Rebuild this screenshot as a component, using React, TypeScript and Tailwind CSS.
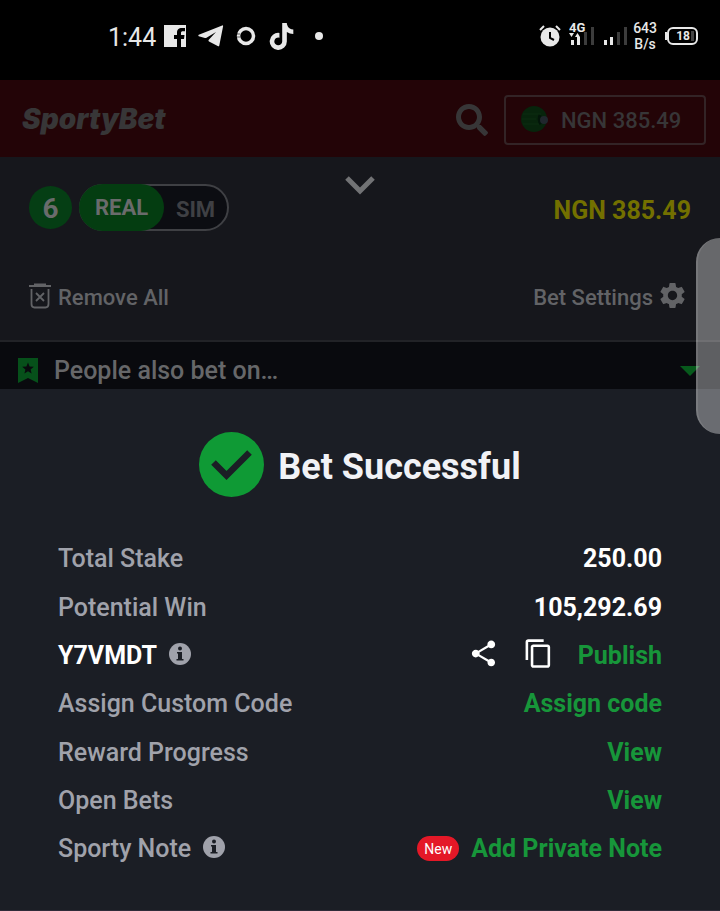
import { useState } from "react";
import type { ReactNode } from "react";
import { FaSearch, FaTiktok } from "react-icons/fa";
import { MdContentCopy, MdSettings, MdShare } from "react-icons/md";

const BALANCE = "NGN 385.49";

function SignalBars({ network }: { network?: string }) {
    return (
        <svg width="25" height="32" viewBox="0 0 25 32" aria-hidden="true">
            {network && (
                <>
                    <text x="0" y="12" fontSize="13" fontWeight="700" fill="#e8e8e8" fontFamily="Roboto, sans-serif">
                        {network}
                    </text>
                    <path d="M0 13h5l-2.500 4zM6 17h5l-2.500-4z" fill="#e8e8e8" />
                </>
            )}
            <rect x="2" y="20" width="3" height="5" fill="#e8e8e8" />
            <rect x="8" y="17" width="3" height="8" fill="#e8e8e8" />
            <rect x="15" y="12" width="3" height="13" fill="#3c3c3c" />
            <rect x="22" y="7" width="3" height="18" fill="#3c3c3c" />
        </svg>
    );
}

function InfoIcon() {
    return (
        <svg width="22" height="22" viewBox="0 0 22 22" aria-hidden="true">
            <circle cx="11" cy="11" r="11" fill="currentColor" />
            <circle cx="11" cy="5.500" r="2" fill="#1b1e25" />
            <path d="M8 9h5v7h1.500v1.500h-7V16H9v-5.500H8z" fill="#1b1e25" />
        </svg>
    );
}

function StatusBar() {
    return (
        <div className="flex h-20 items-start justify-between bg-black pl-[108px] pr-[22px] pt-5 text-[#e8e8e8]">
            <div className="flex h-8 items-center">
                <span className="pt-1 text-[25px]">1:44</span>
                <svg className="ml-2" width="22" height="22" viewBox="0 0 22 22" aria-hidden="true">
                    <path
                        fill="currentColor"
                        d="M0 0h22v22h-5v-8h3l.5-4H17V8c0-1.200.5-1.800 2-1.800h2V3h-3c-3.500 0-5 2-5 4.600V10h-3v4h3v8H0z"
                    />
                </svg>
                <svg className="ml-3" width="26" height="22" viewBox="0 0 26 22" fill="currentColor" aria-hidden="true">
                    <path d="M.8 9.800L24.200.4q1-.2.900.8l-3.800 19.200q-.4 1.400-1.600.7L11 16.500q-1-.8-.2-1.700L18 7 8.500 12.800q-.8.500-1.600.2L.8 11.300q-.9-.8 0-1.500z" />
                </svg>
                <svg className="ml-3" width="20" height="20" viewBox="0 0 20 20" aria-hidden="true">
                    <circle cx="10" cy="10" r="7.500" fill="none" stroke="currentColor" strokeWidth="3.500" />
                    <path d="M0 8h4M0 11h4" stroke="#000" strokeWidth=".6" />
                </svg>
                <FaTiktok className="ml-3" size={27} />
                <span className="ml-5 size-2 rounded-full bg-[#e8e8e8]" />
            </div>
            <div className="flex h-8 items-center">
                <svg width="22" height="22" viewBox="0 0 22 22" aria-hidden="true">
                    <circle cx="11" cy="12" r="9.500" fill="currentColor" />
                    <path d="M1 5l4-4M21 5l-4-4" stroke="currentColor" strokeWidth="2" />
                    <path d="M11 7v6l4 2" fill="none" stroke="#000" strokeWidth="2" />
                </svg>
                <div className="ml-2">
                    <SignalBars network="4G" />
                </div>
                <div className="ml-2">
                    <SignalBars />
                </div>
                <div className="ml-1.5 flex flex-col text-center text-sm leading-4 font-medium">
                    <span>643</span>
                    <span>B/s</span>
                </div>
                <span className="ml-2 h-2 w-0.5 bg-[#e8e8e8]" />
                <div className="flex h-[18px] w-[31px] items-center justify-end gap-px rounded-md border-2 border-[#e8e8e8] pr-0.5 text-xs font-bold">
                    18
                    <span className="h-2.5 w-[3px] bg-[#444444]" />
                </div>
            </div>
        </div>
    );
}

function Header() {
    return (
        <header className="flex h-[77px] items-center justify-between bg-[#230407] pt-0.5 pl-[22px] pr-3.5 text-[#373637]">
            <a href="#" className="pb-0.5 font-[Inter] text-[28px] leading-8 font-black italic">
                SportyBet
            </a>
            <div className="flex items-center gap-4">
                <button aria-label="Search">
                    <FaSearch size={32} />
                </button>
                <button className="flex h-[50px] w-[202px] items-center rounded border-2 border-[#332426] pl-3.5 text-[22px] font-medium">
                    <svg width="29" height="28" viewBox="0 0 29 28" aria-hidden="true">
                        <circle cx="14" cy="13" r="13" fill="#07240c" />
                        <path d="M3 8h18M2 13h14M3 18h16" stroke="#09280e" strokeWidth="2" />
                        <path d="M20 9q-2 5 1 9" stroke="#03150a" strokeWidth="3" fill="none" />
                        <circle cx="24" cy="14" r="4" fill="#20272d" />
                    </svg>
                    <span className="ml-3 pt-0.5">{BALANCE}</span>
                </button>
            </div>
        </header>
    );
}

function BetslipPanel() {
    const [mode, setMode] = useState("REAL");

    return (
        <section className="border-b-2 border-[#222327] bg-[#16171c] pt-[18px] text-[#6a6b6c]">
            <div className="grid grid-cols-[1fr_auto_1fr] items-start px-[29px]">
                <div className="flex items-center gap-[7px] pt-[9px]">
                    <span className="flex size-[43px] items-center justify-center rounded-full bg-[#053e14] pt-0.5 text-[28px] font-bold">
                        6
                    </span>
                    <div className="flex h-[47px] w-[150px] rounded-full border-2 border-[#3f4044] bg-[#0c0d12] text-[22px] font-bold">
                        <button
                            className="-my-0.5 -ml-0.5 w-[85px] rounded-full bg-[#043d11]"
                            aria-pressed={mode === "REAL"}
                            onClick={() => setMode("REAL")}
                        >
                            REAL
                        </button>
                        <button
                            className="flex-1 pt-1 text-[#3f4044]"
                            aria-pressed={mode === "SIM"}
                            onClick={() => setMode("SIM")}
                        >
                            SIM
                        </button>
                    </div>
                </div>
                <button aria-label="Close betslip">
                    <svg width="30" height="20" viewBox="0 0 30 20" aria-hidden="true">
                        <path d="M2 3l13 13L28 3" fill="none" stroke="#727375" strokeWidth="5" />
                    </svg>
                </button>
                <span className="pt-5 text-right text-[25px] leading-8 font-bold text-[#737000]">{BALANCE}</span>
            </div>
            <div className="flex h-[109px] items-center justify-between pt-11 pb-5 pl-[29px] pr-8 text-[22px] font-medium text-[#626366]">
                <button className="flex items-center gap-[7px]">
                    <svg className="mb-1" width="22" height="26" viewBox="0 0 22 26" fill="none" stroke="currentColor" aria-hidden="true">
                        <path d="M0 3h22M5 1.500h12" strokeWidth="2" />
                        <path d="M2.500 6v15q0 3.500 3 3.500h11q3 0 3-3.500V6M7 10l8 8M15 10l-8 8" strokeWidth="1.800" />
                    </svg>
                    Remove All
                </button>
                <button className="flex items-center gap-1">
                    Bet Settings
                    <MdSettings className="mb-1" size={31} />
                </button>
            </div>
        </section>
    );
}

function PeopleAlsoBet() {
    return (
        <button className="flex h-[47px] w-full items-center bg-[#090a0e] pt-2.5 pl-[18px] pr-5 text-[25px] font-medium text-[#666769]">
            <svg width="20" height="25" viewBox="0 0 20 25" aria-hidden="true">
                <path d="M0 0h20v25l-10-5-10 5z" fill="#06501a" />
                <path d="M10 4.500l1.600 3.900 4.200.3-3.200 2.700 1 4.100-3.600-2.200-3.600 2.200 1-4.100-3.200-2.700 4.200-.3z" fill="#090a0e" />
            </svg>
            <span className="ml-4">People also bet on…</span>
            <svg className="ml-auto" width="20" height="10" viewBox="0 0 20 10" aria-hidden="true">
                <path d="M0 0h20L10 10z" fill="#075a1c" />
            </svg>
        </button>
    );
}

function Row({ label, info, children }: { label: ReactNode; info?: boolean; children?: ReactNode }) {
    return (
        <li className="flex h-12 items-center justify-between">
            <span className="flex items-center text-[#a0a2ab]">
                {label}
                {info && (
                    <button className="mb-1 ml-3" aria-label="More info">
                        <InfoIcon />
                    </button>
                )}
            </span>
            <span className="flex items-center font-bold text-white">{children}</span>
        </li>
    );
}

function ActionLink({ children }: { children: ReactNode }) {
    return (
        <a href="#" className="text-[#17963a]">
            {children}
        </a>
    );
}

function BetSuccess() {
    return (
        <main className="border-b border-[#2f2b38] bg-[#1b1e25] px-[58px] pt-[43px] pb-[37px]">
            <div className="flex items-center justify-center gap-3.5">
                <svg width="65" height="65" viewBox="0 0 65 65" aria-hidden="true">
                    <circle cx="32.500" cy="32.500" r="32.500" fill="#0f9a35" />
                    <path d="M14.500 30.500l13 13L50.500 20.500" fill="none" stroke="#1b1e25" strokeWidth="6.500" />
                </svg>
                <h1 className="pt-1 text-[36px] font-bold text-[#f1f2f6]">Bet Successful</h1>
            </div>
            <ul className="mt-[38px] flex h-[338px] flex-col justify-between text-[25px] font-medium">
                <Row label="Total Stake">250.00</Row>
                <Row label="Potential Win">105,292.69</Row>
                <Row label={<b className="font-bold text-white">Y7VMDT</b>} info>
                    <button className="mb-1" aria-label="Share">
                        <MdShare size={31} />
                    </button>
                    <button className="mb-1 ml-6" aria-label="Copy code">
                        <MdContentCopy size={31} />
                    </button>
                    <span className="ml-6">
                        <ActionLink>Publish</ActionLink>
                    </span>
                </Row>
                <Row label="Assign Custom Code">
                    <ActionLink>Assign code</ActionLink>
                </Row>
                <Row label="Reward Progress">
                    <ActionLink>View</ActionLink>
                </Row>
                <Row label="Open Bets">
                    <ActionLink>View</ActionLink>
                </Row>
                <Row label="Sporty Note" info>
                    <span className="mr-3 flex h-[25px] w-[42px] items-center justify-center rounded-full bg-[#e41827] text-sm font-normal">
                        New
                    </span>
                    <ActionLink>Add Private Note</ActionLink>
                </Row>
            </ul>
        </main>
    );
}

export default function App() {
    return (
        <div className="relative min-h-screen overflow-hidden bg-[#1b1e25] font-[Roboto,sans-serif]">
            <StatusBar />
            <Header />
            <BetslipPanel />
            <PeopleAlsoBet />
            <BetSuccess />
            {/* edge panel handle floats over everything */}
            <div className="absolute top-[238px] right-0 h-[196px] w-6 rounded-l-3xl border-l-2 border-white/10 bg-white/35" />
        </div>
    );
}
